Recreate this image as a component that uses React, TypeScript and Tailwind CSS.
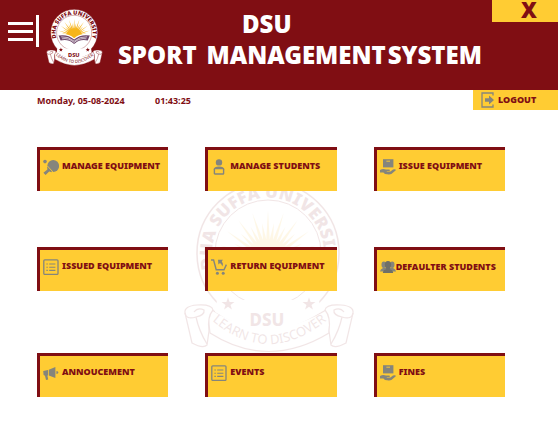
import { useId, type ReactNode } from "react";

function Crest({ className }: { className: string }) {
  const id = useId();
  const rays = Array.from({ length: 21 }, (_, i) => {
    const a = Math.PI + (Math.PI * i) / 20;
    const r = i % 2 ? 38 : 50;
    const p = (angle: number, radius: number) =>
      `${(85 + Math.cos(angle) * radius).toFixed(1)},${(80 + Math.sin(angle) * radius).toFixed(1)}`;
    return `${p(a - 0.09, 20)} ${p(a, r)} ${p(a + 0.09, 20)}`;
  });
  const star = "0,-6.5 1.6,-2 6.4,-2 2.5,1 3.9,5.5 0,2.7 -3.9,5.5 -2.5,1 -6.4,-2 -1.6,-2";
  return (
    <svg viewBox="0 0 172 172" className={className} role="img" aria-label="DHA Suffa University crest">
      <defs>
        <path id={`${id}ring`} d="M36 100 A56 56 0 1 1 134 100" />
        <path id={`${id}motto`} d="M26 137 Q85 189 147 137" />
      </defs>
      <circle cx="85" cy="72" r="71" fill="#fff" stroke="#800e13" strokeWidth="1.5" />
      <circle cx="85" cy="72" r="53" fill="#fff" stroke="#800e13" strokeWidth="1" />
      <g fill="#f6b51b">
        {rays.map((r) => (
          <polygon key={r} points={r} />
        ))}
        <path d="M61 82 A24 24 0 0 1 109 82 L85 92Z" />
      </g>
      <path d="M40 77 Q65 72 85 88 Q105 72 130 77 L124 95 Q102 88 85 102 Q68 88 46 95Z" fill="#fff" />
      <path
        d="M38 80 Q65 75 85 92 Q105 75 132 80 L126 95 Q103 90 88 103 Q85 107 82 103 Q67 90 44 95Z"
        fill="#6d4568"
      />
      <path d="M46 84 Q67 82 85 97 Q103 82 124 84 M48 90 Q68 86 85 101 Q102 86 122 90" fill="none" stroke="#fff" strokeWidth="2" />
      <path
        d="M24 126 Q85 166 148 126 L146 152 Q85 189 27 152Z"
        fill="#fff"
        stroke="#800e13"
        strokeWidth="1.2"
      />
      <path d="M34 119 H136 L138 131 Q85 166 32 131Z" fill="#fff" />
      <g fill="#800e13">
        <polygon points={star} transform="translate(45 123)" />
        <polygon points={star} transform="translate(126 123)" />
      </g>
      <g fill="#fff" stroke="#800e13" strokeWidth="1.2">
        <path d="M2 132 Q1 125 14 124 Q29 123 30 129 Q24 136 26 150 L24 164 Q20 168 9 162Z" />
        <path d="M2 132 Q3 139 13 136 Q22 134 21 129 Q15 126 11 131 M13 136 Q16 150 24 163" fill="none" />
        <path d="M170 132 Q171 125 158 124 Q143 123 142 129 Q148 136 146 150 L148 164 Q152 168 163 162Z" />
        <path d="M170 132 Q169 139 159 136 Q150 134 151 129 Q157 126 161 131 M159 136 Q156 150 148 163" fill="none" />
      </g>
      <g fill="#800e13" fontFamily="'Noto Sans', 'Open Sans', sans-serif">
        <text fontSize="17" fontWeight="900" textAnchor="middle">
          <textPath href={`#${id}ring`} startOffset="50%">
            DHA SUFFA UNIVERSITY
          </textPath>
        </text>
        <text x="84" y="145" fontSize="17" fontWeight="800" textAnchor="middle">
          DSU
        </text>
        <text fontSize="13" textAnchor="middle">
          <textPath href={`#${id}motto`} startOffset="50%">
            LEARN TO DISCOVER
          </textPath>
        </text>
      </g>
    </svg>
  );
}

function Icon({ children }: { children: ReactNode }) {
  return (
    <svg viewBox="0 0 16 16" className="mt-px size-4 shrink-0 text-[#85857c]" fill="currentColor" aria-hidden="true">
      {children}
    </svg>
  );
}

const PaddleIcon = () => (
  <Icon>
    <circle cx="2" cy="2.6" r="1.8" />
    <circle cx="10.2" cy="7" r="5.9" />
    <path d="M4.2 7.6 L9 13.2 L6.2 12.6 L2.6 16 L0.4 13.8 L4.4 10.4Z" />
    <path d="M4.4 7 L10 13" stroke="#ffcc33" strokeWidth="0.8" />
  </Icon>
);

const StudentIcon = () => (
  <Icon>
    <circle cx="8" cy="3.4" r="3.2" />
    <path d="M2.6 10.6 Q3 7.4 8 7.4 Q13 7.4 13.4 10.6Z" />
    <rect x="3.4" y="9.6" width="9.2" height="5.4" rx="0.6" fill="#ffcc33" stroke="currentColor" strokeWidth="1.4" />
  </Icon>
);

const HandBoxIcon = () => (
  <Icon>
    <path d="M3 0.2 H13.4 V8.4 H3Z" />
    <path d="M6.4 2.2 H10" stroke="#ffcc33" strokeWidth="0.9" />
    <path d="M0 11 Q3 9.2 6 10.6 H9.4 Q10.6 11.2 9.4 12 H6.6 L7 12.6 H10.4 L13 10.6 Q16 9.8 15.8 11.2 L11.4 15 Q9.6 15.8 5 15 L3.4 13.4 H0Z" />
  </Icon>
);

const ListIcon = () => (
  <Icon>
    <rect x="0.8" y="0.8" width="14.2" height="14.6" rx="1" fill="none" stroke="currentColor" strokeWidth="1.3" />
    <path d="M3.4 5 H4.8 M6.2 5 H12.4 M3.4 8.2 H4.8 M6.2 8.2 H12.4 M3.4 11.4 H4.8 M6.2 11.4 H12.4" stroke="currentColor" strokeWidth="1.1" />
  </Icon>
);

const CartIcon = () => (
  <Icon>
    <path d="M0 1 H2.6 L5.2 10.8 H13 L15.4 5.6" fill="none" stroke="currentColor" strokeWidth="1.4" />
    <circle cx="6.4" cy="14.2" r="1.5" />
    <circle cx="12.2" cy="14.2" r="1.5" />
    <path d="M7 0.8 H12 L10.8 2.2 Q12.6 4.4 11.4 7.6 Q10.8 5.2 9 4 L7.4 5.6Z" />
  </Icon>
);

const CrowdIcon = () => (
  <Icon>
    <ellipse cx="3.8" cy="4.8" rx="2.3" ry="3.2" />
    <ellipse cx="12.2" cy="4.8" rx="2.3" ry="3.2" />
    <path d="M0 11.6 Q0.2 9 3 8 H13 Q15.8 9 16 11.6Z" />
    <path
      d="M8 1 Q11.2 1 11.2 4.6 Q11.2 7 9.8 8.4 V9.2 Q13 10 13.2 13 H2.8 Q3 10 6.2 9.2 V8.4 Q4.8 7 4.8 4.6 Q4.8 1 8 1Z"
      fill="#6f6f68"
    />
  </Icon>
);

const MegaphoneIcon = () => (
  <Icon>
    <path d="M0.2 6 L5 5 V10.4 L4.4 10.6 L5.2 14.6 L3 15 L2 10.8 L0.6 10Z" />
    <path d="M5.8 4.8 L12.4 2 V13 L5.8 10.4Z" />
    <path d="M13.4 6 Q15.6 6.4 15.4 7.6 Q15.4 8.8 13.4 9Z" />
  </Icon>
);

function Tile({ icon, label, tight = false }: { icon: ReactNode; label: string; tight?: boolean }) {
  return (
    <button
      type="button"
      className={`flex h-11 items-start border-t-3 border-l-3 border-[#800e13] bg-[#ffcc33] pl-[3px] text-[9px] leading-4 font-black whitespace-nowrap text-[#800e13] ${
        tight ? "gap-0 pt-[9px]" : "gap-[3px] pt-2"
      }`}
    >
      {icon}
      {label}
    </button>
  );
}

export default function App() {
  return (
    <div className="bg-white font-['Noto_Sans','Open_Sans',sans-serif] text-[#800e13]">
      <header className="flex h-[90px] items-start bg-[#800e13] pl-2 text-white">
        <button type="button" aria-label="Menu" className="mt-[22px] flex w-[25px] flex-col gap-[5px]">
          <span className="h-[3px] w-full bg-white" />
          <span className="h-[3px] w-full bg-white" />
          <span className="h-[3px] w-full bg-white" />
        </button>
        <span className="mt-[15px] ml-[3px] h-8 w-[3px] bg-white" />
        <Crest className="mt-[9px] ml-[7px] size-[57px] shrink-0" />
        <h1 className="mt-2 ml-[15px] text-2xl leading-[31px] font-black whitespace-nowrap">
          <span className="block pl-[124px]">DSU</span>
          <span className="flex">
            <span className="mr-2.5">SPORT</span>
            <span className="mr-0.5">MANAGEMENT</span>
            <span>SYSTEM</span>
          </span>
        </h1>
        <button
          type="button"
          aria-label="Close"
          className="ml-auto flex h-[22px] w-[66px] items-center justify-center bg-[#ffcc33] pb-1 pl-2 text-[22px] leading-none font-black text-[#800e13]"
        >
          X
        </button>
      </header>

      <div className="flex items-start pl-[37px] text-[9px] leading-[21px] font-bold">
        <span className="w-[118px]">Monday, 05-08-2024</span>
        <time>01:43:25</time>
        <button
          type="button"
          className="ml-auto flex h-5 w-[85px] items-center gap-[3px] bg-[#ffcc33] pl-2 leading-4 font-black"
        >
          <svg viewBox="0 0 14 16" className="h-4 w-3.5 text-[#85857c]" fill="none" aria-hidden="true">
            <path d="M12 3.5 V1 H1 V15 H12 V12.5" stroke="currentColor" strokeWidth="1.3" />
            <path d="M4 6.2 H8 V3.6 L13 8 L8 12.4 V9.8 H4Z" fill="currentColor" />
          </svg>
          LOGOUT
        </button>
      </div>

      <main className="relative pt-9 pr-[53px] pb-[49px] pl-[37px]">
        <Crest className="absolute top-[70px] left-1/2 -ml-24 size-[172px] opacity-10" />
        <div className="relative grid grid-cols-3 gap-x-[37px] gap-y-14">
          <Tile icon={<PaddleIcon />} label="MANAGE EQUIPMENT" />
          <Tile icon={<StudentIcon />} label="MANAGE STUDENTS" />
          <Tile icon={<HandBoxIcon />} label="ISSUE EQUIPMENT" />
          <Tile icon={<ListIcon />} label="ISSUED EQUIPMENT" />
          <Tile icon={<CartIcon />} label="RETURN EQUIPMENT" />
          <Tile icon={<CrowdIcon />} label="DEFAULTER STUDENTS" tight />
        </div>
        <div className="relative mt-[62px] grid grid-cols-3 gap-x-[37px]">
          <Tile icon={<MegaphoneIcon />} label="ANNOUCEMENT" />
          <Tile icon={<ListIcon />} label="EVENTS" />
          <Tile icon={<HandBoxIcon />} label="FINES" />
        </div>
      </main>
    </div>
  );
}
